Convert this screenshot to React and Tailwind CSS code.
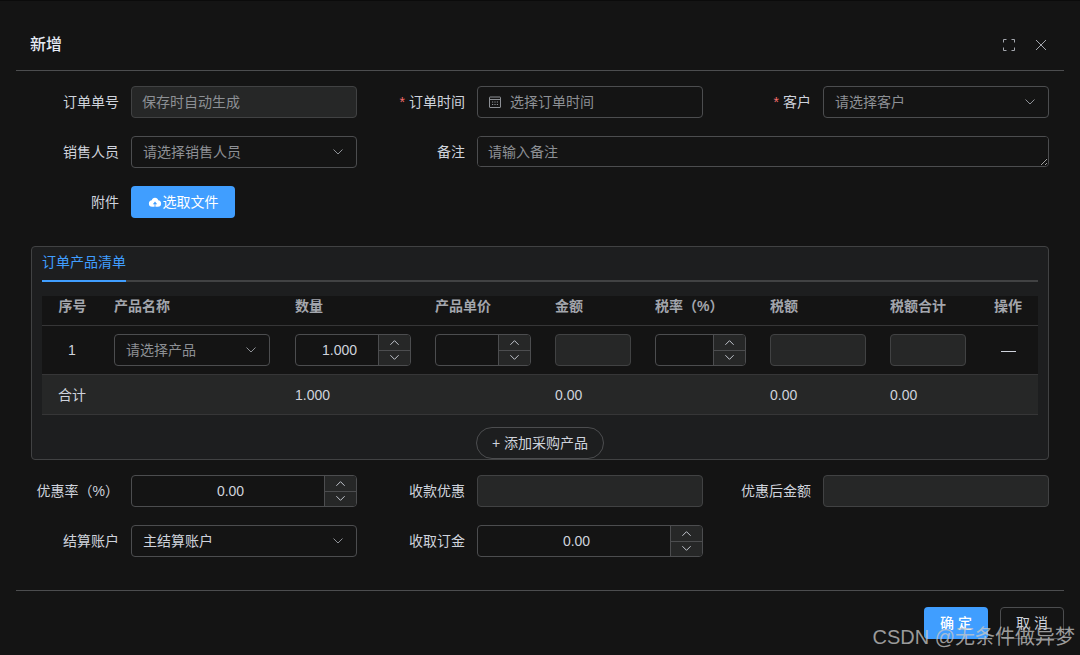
import React from 'react';

const fontStack = "font-['Liberation_Sans','Noto_Sans_CJK_SC',sans-serif]";

function Chevron({ up = false, className = '' }) {
  return (
    <svg viewBox="0 0 12 12" className={className} fill="none" stroke="currentColor" strokeWidth="1">
      <polyline points={up ? '1.5,8.5 6,4 10.5,8.5' : '1.5,3.5 6,8 10.5,3.5'} />
    </svg>
  );
}

function CloudIcon() {
  return (
    <svg viewBox="0 0 1024 1024" className="w-[14px] h-[14px] shrink-0" fill="currentColor">
      <path d="M544 864V672h128L512 480 352 672h128v192H320v-1.6c-5.376.32-10.496 1.6-16 1.6A240 240 0 0 1 64 624c0-123.136 93.12-223.488 212.608-237.248A239.808 239.808 0 0 1 512 192a239.872 239.872 0 0 1 235.456 194.752c119.488 13.76 212.48 114.112 212.48 237.248a240 240 0 0 1-240 240c-5.376 0-10.56-1.28-16-1.6v1.6z" />
    </svg>
  );
}

function CalendarIcon() {
  return (
    <svg viewBox="0 0 14 14" className="w-[14px] h-[14px] shrink-0 text-[#8d9095]" fill="none" stroke="currentColor" strokeWidth="1">
      <rect x="1.5" y="2" width="11" height="10.5" rx="0.5" />
      <line x1="1.5" y1="4.5" x2="12.5" y2="4.5" />
      <line x1="4" y1="7" x2="5.2" y2="7" />
      <line x1="6.4" y1="7" x2="7.6" y2="7" />
      <line x1="8.8" y1="7" x2="10" y2="7" />
      <line x1="4" y1="9.5" x2="5.2" y2="9.5" />
      <line x1="6.4" y1="9.5" x2="7.6" y2="9.5" />
      <line x1="8.8" y1="9.5" x2="10" y2="9.5" />
    </svg>
  );
}

function FormItem({ label, required, children }) {
  return (
    <div className="flex items-center">
      <label className="w-[100px] shrink-0 pr-3 text-right text-sm text-[#cfd3dc] whitespace-nowrap">
        {required && <span className="text-[#f56c6c] mr-1">*</span>}
        {label}
      </label>
      <div className="flex-1 min-w-0">{children}</div>
    </div>
  );
}

function TextInput({ placeholder, disabled, icon }) {
  return (
    <div className={`flex items-center h-8 px-[10px] rounded border ${disabled ? 'bg-[#262727] border-[#414243]' : 'bg-[#141414] border-[#4c4d4f]'}`}>
      {icon && <span className="mr-2 flex">{icon}</span>}
      <input
        readOnly
        disabled={disabled}
        placeholder={placeholder}
        className="w-full min-w-0 bg-transparent text-sm outline-none placeholder:text-[#8d9095]"
      />
    </div>
  );
}

function SelectBox({ placeholder, value }) {
  return (
    <div className="flex items-center justify-between h-8 pl-[11px] pr-3 rounded border border-[#4c4d4f] bg-[#141414] text-sm">
      <span className={value ? 'text-[#cfd3dc]' : 'text-[#8d9095]'}>{value || placeholder}</span>
      <Chevron className="w-3 h-3 text-[#8d9095]" />
    </div>
  );
}

function NumberInput({ value, width = 'w-full', arrows = 'w-8' }) {
  return (
    <div className={`flex h-8 rounded border border-[#4c4d4f] bg-[#141414] overflow-hidden ${width}`}>
      <div className="flex-1 flex items-center justify-center pl-[5px] text-sm text-[#cfd3dc]">{value}</div>
      <div className={`${arrows} shrink-0 flex flex-col border-l border-[#4c4d4f] bg-[#262727] text-[#cfd3dc]`}>
        <div className="flex-1 flex items-center justify-center border-b border-[#4c4d4f]">
          <Chevron up className="w-[11px] h-[11px]" />
        </div>
        <div className="flex-1 flex items-center justify-center">
          <Chevron className="w-[11px] h-[11px]" />
        </div>
      </div>
    </div>
  );
}

function DisabledBox({ width }) {
  return <div className={`h-8 rounded border border-[#414243] bg-[#262727] ${width}`} />;
}

const gridCols = 'grid grid-cols-[60px_181px_140px_120px_100px_115px_120px_100px_60px]';
const headers = ['序号', '产品名称', '数量', '产品单价', '金额', '税率（%）', '税额', '税额合计', '操作'];

function ProductTable() {
  return (
    <div className="w-[996px] text-sm">
      <div className={`${gridCols} h-[30px] bg-[#141414] border-b border-[#363637] font-bold text-[#a3a6ad]`}>
        {headers.map((h, i) => (
          <div key={h} className={`leading-[20px] whitespace-nowrap ${i === 0 || i === 8 ? 'text-center' : 'pl-3'} ${i === 0 ? 'pl-[1px]' : ''}`}>
            {h}
          </div>
        ))}
      </div>
      <div className={`${gridCols} h-[49px] items-center bg-[#141414] border-b border-[#363637] text-[#cfd3dc]`}>
        <div className="text-center">1</div>
        <div className="pl-3"><div className="w-[156px]"><SelectBox placeholder="请选择产品" /></div></div>
        <div className="pl-3"><NumberInput value="1.000" width="w-[116px]" /></div>
        <div className="pl-3"><NumberInput width="w-[96px]" /></div>
        <div className="pl-3"><DisabledBox width="w-[76px]" /></div>
        <div className="pl-3"><NumberInput width="w-[91px]" /></div>
        <div className="pl-3"><DisabledBox width="w-[96px]" /></div>
        <div className="pl-3"><DisabledBox width="w-[76px]" /></div>
        <div className="flex justify-center"><div className="w-[15px] h-px bg-[#cfd3dc] mt-[3px]" /></div>
      </div>
      <div className={`${gridCols} h-10 items-center bg-[#262727] border-b border-[#363637] text-[#cfd3dc]`}>
        <div className="text-center">合计</div>
        <div />
        <div className="pl-3">1.000</div>
        <div />
        <div className="pl-3">0.00</div>
        <div />
        <div className="pl-3">0.00</div>
        <div className="pl-3">0.00</div>
        <div />
      </div>
    </div>
  );
}

export default function App() {
  return (
    <div className={`relative h-[655px] overflow-hidden bg-[#141414] border-t border-[#0b0b0b] ${fontStack} [color-scheme:dark]`}>
      <div className="px-4">
        <div className="flex items-end justify-between h-[70px] pl-[14px] pr-[17px] pb-[13px] border-b border-[#4c4d4f]">
          <span className="text-base leading-6 font-medium text-[#e5eaf3]">新增</span>
          <div className="flex items-center gap-5 mb-[6px] text-[#a3a6ad]">
            <svg viewBox="0 0 12 12" className="w-3 h-3" fill="none" stroke="currentColor" strokeWidth="1">
              <path d="M0.5 3.5V0.5H3.5M8.5 0.5H11.5V3.5M11.5 8.5V11.5H8.5M3.5 11.5H0.5V8.5" />
            </svg>
            <svg viewBox="0 0 12 12" className="w-3 h-3" fill="none" stroke="currentColor" strokeWidth="1">
              <path d="M1 1L11 11M11 1L1 11" />
            </svg>
          </div>
        </div>

        <div className="px-[15px] pt-[15px]">
          <div className="grid grid-cols-3 gap-x-5 gap-y-[18px]">
            <FormItem label="订单单号"><TextInput disabled placeholder="保存时自动生成" /></FormItem>
            <FormItem label="订单时间" required><TextInput icon={<CalendarIcon />} placeholder="选择订单时间" /></FormItem>
            <FormItem label="客户" required><SelectBox placeholder="请选择客户" /></FormItem>
            <FormItem label="销售人员"><SelectBox placeholder="请选择销售人员" /></FormItem>
            <div className="col-span-2">
              <FormItem label="备注">
                <textarea
                  readOnly
                  placeholder="请输入备注"
                  className="block w-full h-[31px] px-[10px] py-[5px] rounded border border-[#4c4d4f] bg-[#141414] text-sm leading-[20px] outline-none resize-y placeholder:text-[#8d9095]"
                />
              </FormItem>
            </div>
            <FormItem label="附件">
              <button className="flex items-center justify-center gap-px w-[104px] h-8 rounded bg-[#409eff] text-sm text-white">
                <CloudIcon />
                选取文件
              </button>
            </FormItem>
          </div>

          <div className="mt-7 h-[214px] rounded border border-[#414243] bg-[#1d1e1f] px-[10px]">
            <div className="h-[35px] border-b-2 border-[#414243]">
              <div className="w-[84px] h-[35px] pt-[4px] border-b-2 border-[#409eff] text-sm leading-[22px] text-[#409eff]">
                订单产品清单
              </div>
            </div>
            <div className="mt-[14px]">
              <ProductTable />
            </div>
            <div className="flex justify-center mt-3">
              <button className="w-[128px] h-8 rounded-full border border-[#4c4d4f] text-sm text-[#cfd3dc]">
                + 添加采购产品
              </button>
            </div>
          </div>

          <div className="mt-[15px] grid grid-cols-3 gap-x-5 gap-y-[18px]">
            <FormItem label="优惠率（%）"><NumberInput value="0.00" /></FormItem>
            <FormItem label="收款优惠"><DisabledBox width="w-full" /></FormItem>
            <FormItem label="优惠后金额"><DisabledBox width="w-full" /></FormItem>
            <FormItem label="结算账户"><SelectBox value="主结算账户" /></FormItem>
            <FormItem label="收取订金"><NumberInput value="0.00" /></FormItem>
          </div>
        </div>

        <div className="mt-[33px] border-t border-[#4c4d4f] pt-4 flex justify-end gap-3">
          <button className="w-16 h-8 rounded bg-[#409eff] pl-1 text-sm font-medium text-white tracking-[4px]">确定</button>
          <button className="w-16 h-8 rounded border border-[#4c4d4f] pl-1 text-sm text-[#cfd3dc] tracking-[4px]">取消</button>
        </div>
      </div>

      <div className="absolute right-[5px] bottom-[6px] text-[20px] leading-6 text-[#c8c8c8]/75 whitespace-nowrap">
        CSDN @无条件做异梦
      </div>
    </div>
  );
}
